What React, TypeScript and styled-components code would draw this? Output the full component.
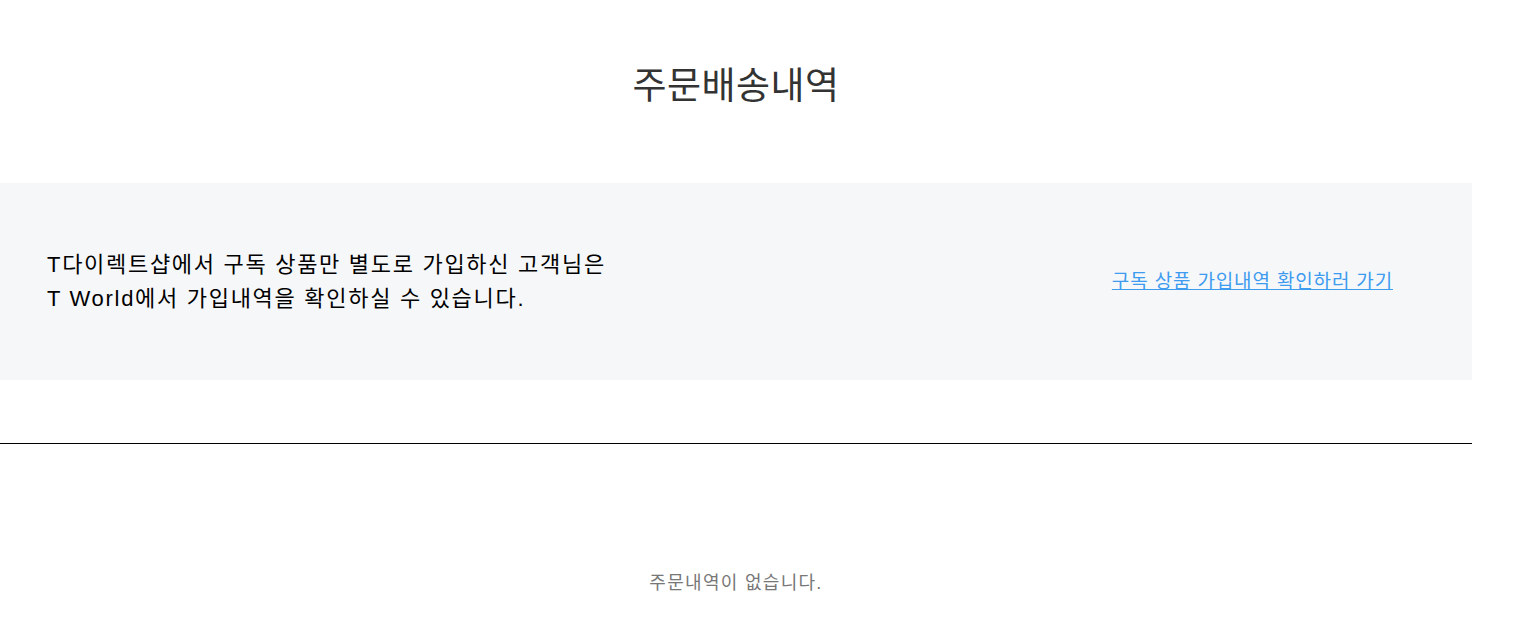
import styled, { createGlobalStyle } from 'styled-components';

const GlobalStyle = createGlobalStyle`
  body {
    margin: 0;
    background: #fff;
    font-family: "Liberation Sans", "Noto Sans CJK KR", sans-serif;
  }
`;

const App = () => {
  return (
    <>
      <GlobalStyle />
      <Wrapper>
        <Title>주문배송내역</Title>
        <Notice>
          <p>
            T다이렉트샵에서 구독 상품만 별도로 가입하신 고객님은
            <br />
            T World에서 가입내역을 확인하실 수 있습니다.
          </p>
          <a href="#">구독 상품 가입내역 확인하러 가기</a>
        </Notice>
        <Divider />
        <Empty>주문내역이 없습니다.</Empty>
      </Wrapper>
    </>
  );
};

const Wrapper = styled.main`
  width: 1472px;
  padding-top: 62px;
`;

const Title = styled.h2`
  margin: 0 0 71px;
  text-align: center;
  font-size: 37px;
  font-weight: 400;
  line-height: 50px;
  letter-spacing: 0.5px;
  color: #333;
`;

const Notice = styled.section`
  height: 197px;
  box-sizing: border-box;
  padding: 0 79px 0 47px;
  background: #f6f7f8;
  display: flex;
  align-items: center;
  justify-content: space-between;

  p {
    margin: 0;
    font-size: 22px;
    line-height: 34px;
    letter-spacing: 1.7px;
    color: #000;
  }

  a {
    margin-top: -4px;
    font-size: 19px;
    letter-spacing: 0.85px;
    color: #3d9bf0;
    text-decoration: underline;
  }
`;

const Divider = styled.hr`
  margin: 63px 0 0;
  border: 0;
  border-top: 1px solid #000;
`;

const Empty = styled.p`
  margin: 124px 0 0;
  text-align: center;
  font-size: 18px;
  letter-spacing: 1.3px;
  color: #777;
`;

export default App;
